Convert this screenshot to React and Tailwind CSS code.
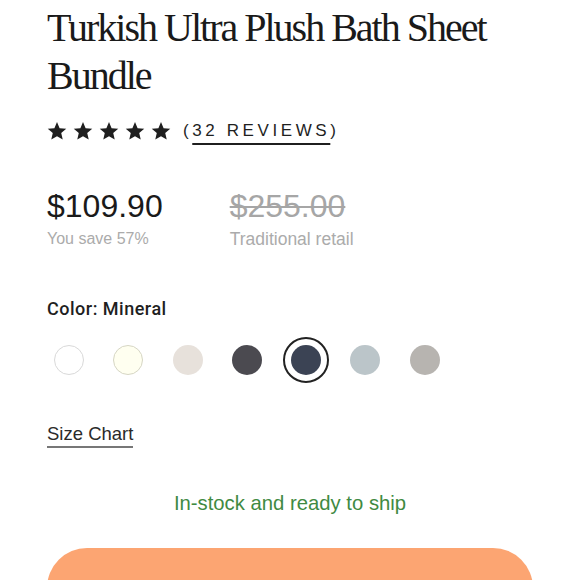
import React from "react";

const Star = () => (
  <svg width="20" height="20" viewBox="0 0 24 24" className="block">
    <path
      d="M12 1.2l3.13 7.36 7.97.69-6.04 5.24 1.81 7.8L12 18.150l-6.87 4.14 1.81-7.8L.9 9.25l7.97-.69L12 1.2z"
      fill="#1f1f1f"
    />
  </svg>
);

const swatches = [
  { c: "bg-[#ffffff] border border-[#d9d9d9]" },
  { c: "bg-[#fffff0] border border-[#d6d6c4]" },
  { c: "bg-[#e7e1db]" },
  { c: "bg-[#4b4a50]" },
  { c: "bg-[#3b4354]", sel: true },
  { c: "bg-[#bbc5c9]" },
  { c: "bg-[#b7b4b0]" },
];

export default function App() {
  const sans = { fontFamily: '"Liberation Sans", Arial, sans-serif' };
  return (
    <div className="w-[580px] h-[580px] overflow-hidden bg-white px-[47px]" style={sans}>
      <h1
        className="pt-[4px] text-[40px] leading-[48px] text-[#1a1a1a] tracking-[-2px]"
        style={{ fontFamily: '"Liberation Serif", "Times New Roman", serif' }}
      >
        Turkish Ultra Plush Bath Sheet Bundle
      </h1>

      <div className="mt-[19px] flex items-center h-[24px]">
        <div className="flex gap-[6px]">
          <Star />
          <Star />
          <Star />
          <Star />
          <Star />
        </div>
        <div className="ml-[12px] text-[17px] leading-[24px] tracking-[3.6px] text-[#1f1f1f]">
          (<span className="underline decoration-2 underline-offset-[7px]">32 REVIEWS</span>)
        </div>
      </div>

      <div className="mt-[43px] flex gap-[67px]">
        <div>
          <div className="text-[32px] leading-[40px] text-[#1a1a1a]">$109.90</div>
          <div className="mt-[1px] text-[16px] leading-[24px] text-[#ababab]">You save 57%</div>
        </div>
        <div>
          <div className="text-[32px] leading-[40px] text-[#a6a6a6] line-through decoration-2">$255.00</div>
          <div className="mt-[1px] text-[17.5px] leading-[24px] text-[#ababab]">Traditional retail</div>
        </div>
      </div>

      <div
        className="mt-[46px] text-[18px] leading-[24px] font-medium text-[#1f1f1f] tracking-[0.5px]"
        style={{ fontFamily: 'Roboto, "Liberation Sans", sans-serif' }}
      >
        Color: Mineral
      </div>

      <div className="mt-[16px] -ml-[1px] flex gap-[13.3px]">
        {swatches.map((s, i) => (
          <div
            key={i}
            className={
              "w-[46px] h-[46px] rounded-full flex items-center justify-center " +
              (s.sel ? "border-2 border-[#222222]" : "")
            }
          >
            <div className={"w-[30px] h-[30px] rounded-full " + s.c}></div>
          </div>
        ))}
      </div>

      <div className="mt-[39px]">
        <span className="inline-block text-[18.5px] leading-[24px] text-[#2a2a2a] border-b-2 border-[#777777]">
          Size Chart
        </span>
      </div>

      <div className="mt-[41px] text-center text-[20.3px] leading-[28px] text-[#3f8a42]">
        In-stock and ready to ship
      </div>

      <div className="mt-[31px] h-[80px] rounded-full bg-[#fca572]"></div>
    </div>
  );
}
